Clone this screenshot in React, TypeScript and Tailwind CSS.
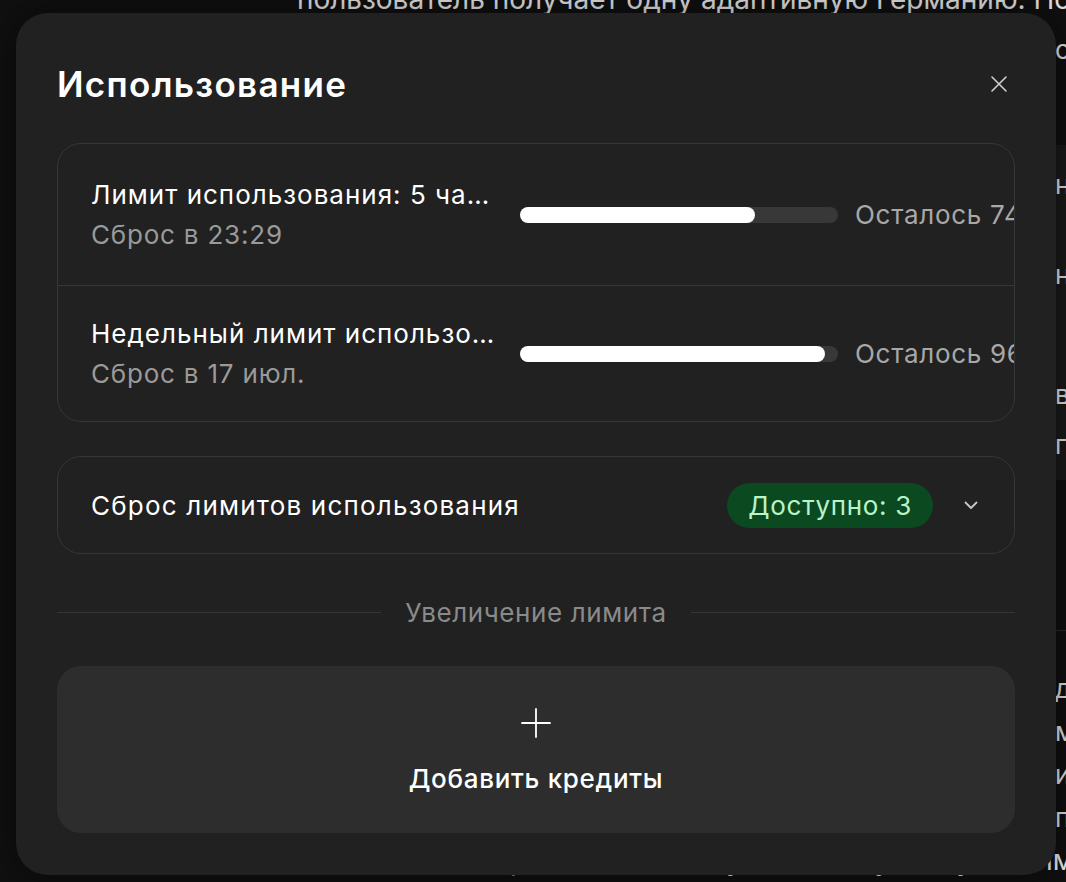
import React from "react";

const font = { fontFamily: 'Inter, "Noto Sans", "Liberation Sans", sans-serif' };

function Bar({ pct }: { pct: number }) {
  return (
    <div className="h-4 w-[318px] shrink-0 rounded-full bg-[#383838]">
      <div className="h-4 rounded-full bg-white" style={{ width: `${pct}%` }} />
    </div>
  );
}

function LimitRow({ title, sub, pct, last }: { title: string; sub: string; pct: number; last?: boolean }) {
  return (
    <div className={`flex items-center pl-[33px] ${last ? "h-[135px]" : "h-[142px] border-b border-[#363636]"}`}>
      <div className="w-[429px] shrink-0 pr-[20px]">
        <div className="truncate text-[26px] leading-[40px] tracking-[1px] text-white">{title}</div>
        <div className="text-[26px] leading-[40px] tracking-[0.8px] text-[#9a9a9a]">{sub}</div>
      </div>
      <Bar pct={pct} />
      <div className="ml-[17px] whitespace-nowrap text-[26px] tracking-[0.7px] text-[#a8a8a8]">Осталось {pct}%</div>
    </div>
  );
}

export default function App() {
  return (
    <div className="relative h-[882px] w-[1066px] overflow-hidden bg-[#101010]" style={font}>
      {/* background page */}
      <div className="absolute inset-0 text-[28px] text-[#e6e6e6]">
        <div className="-mt-[18px] whitespace-nowrap pl-[297px] leading-[34px]">
          пользователь получает одну адаптивную Германию. Пользователь
        </div>
        <div className="absolute left-[1055px] top-0 w-[11px] text-[26px]">
          <div className="mt-[30px] leading-[40px]">с</div>
          <div className="mt-[75px] h-[335px] bg-[#1a1a1a] pt-[20px]">
            <div className="leading-[40px]">н</div>
            <div className="mt-[50px] leading-[40px]">н</div>
            <div className="mt-[80px] leading-[40px]">в</div>
            <div className="mt-[10px] leading-[40px]">г</div>
          </div>
          <div className="mt-[150px] h-px bg-[#2a2a2a]" />
          <div className="mt-[36px] leading-[43px]">д</div>
          <div className="leading-[43px]">м</div>
          <div className="leading-[43px]">и</div>
          <div className="leading-[43px]">п</div>
        </div>
        <div className="absolute left-[297px] top-[843px] whitespace-nowrap leading-[34px]">
          пользователи продолжают получать доступ к функциям, которые будут
        </div>
      </div>

      {/* modal */}
      <div className="absolute left-4 top-[13px] flex h-[862px] w-[1040px] flex-col rounded-[32px] bg-[#212121] px-[41px] pt-[50px] shadow-[0_0_40px_rgba(0,0,0,0.5)]">
        <div className="flex items-center justify-between">
          <h1 className="text-[35px] font-semibold leading-[42px] tracking-[1.3px] text-white">Использование</h1>
          <svg width="18" height="18" viewBox="0 0 18 18" className="mr-[7px]" fill="none" stroke="#cfcfcf" strokeWidth="1.6" strokeLinecap="round">
            <path d="M2 2 L16 16 M16 2 L2 16" />
          </svg>
        </div>

        <div className="mt-[38px] overflow-hidden rounded-[24px] border border-[#363636]">
          <LimitRow title="Лимит использования: 5 часов" sub="Сброс в 23:29" pct={74} />
          <LimitRow title="Недельный лимит использования" sub="Сброс в 17 июл." pct={96} last />
        </div>

        <div className="mt-[34px] flex h-[98px] items-center rounded-[24px] border border-[#363636] pl-[33px] pr-[34px]">
          <div className="flex-1 text-[26px] tracking-[1.2px] text-white">Сброс лимитов использования</div>
          <div className="flex h-[45px] items-center rounded-full bg-[#0b4a20] px-[21px] text-[26px] tracking-[0.7px] text-[#b9f3c9]">
            Доступно: 3
          </div>
          <svg width="18" height="18" viewBox="0 0 18 18" className="ml-[29px]" fill="none" stroke="#c8c8c8" strokeWidth="1.8" strokeLinecap="round" strokeLinejoin="round">
            <path d="M3.5 6.5 L9 12 L14.5 6.5" />
          </svg>
        </div>

        <div className="mt-[39px] flex items-center gap-[24px]">
          <div className="h-px flex-1 bg-[#363636]" />
          <div className="text-[26px] tracking-[0.6px] text-[#8a8a8a]">Увеличение лимита</div>
          <div className="h-px flex-1 bg-[#363636]" />
        </div>

        <div className="mt-[34px] flex h-[167px] flex-col items-center rounded-[24px] bg-[#2d2d2d] pt-[41px]">
          <svg width="32" height="32" viewBox="0 0 32 32" fill="none" stroke="#ffffff" strokeWidth="1.8" strokeLinecap="round">
            <path d="M16 2 V30 M2 16 H30" />
          </svg>
          <div className="mt-[22px] text-[26px] font-medium leading-[36px] tracking-[0.7px] text-white">Добавить кредиты</div>
        </div>
      </div>
    </div>
  );
}
